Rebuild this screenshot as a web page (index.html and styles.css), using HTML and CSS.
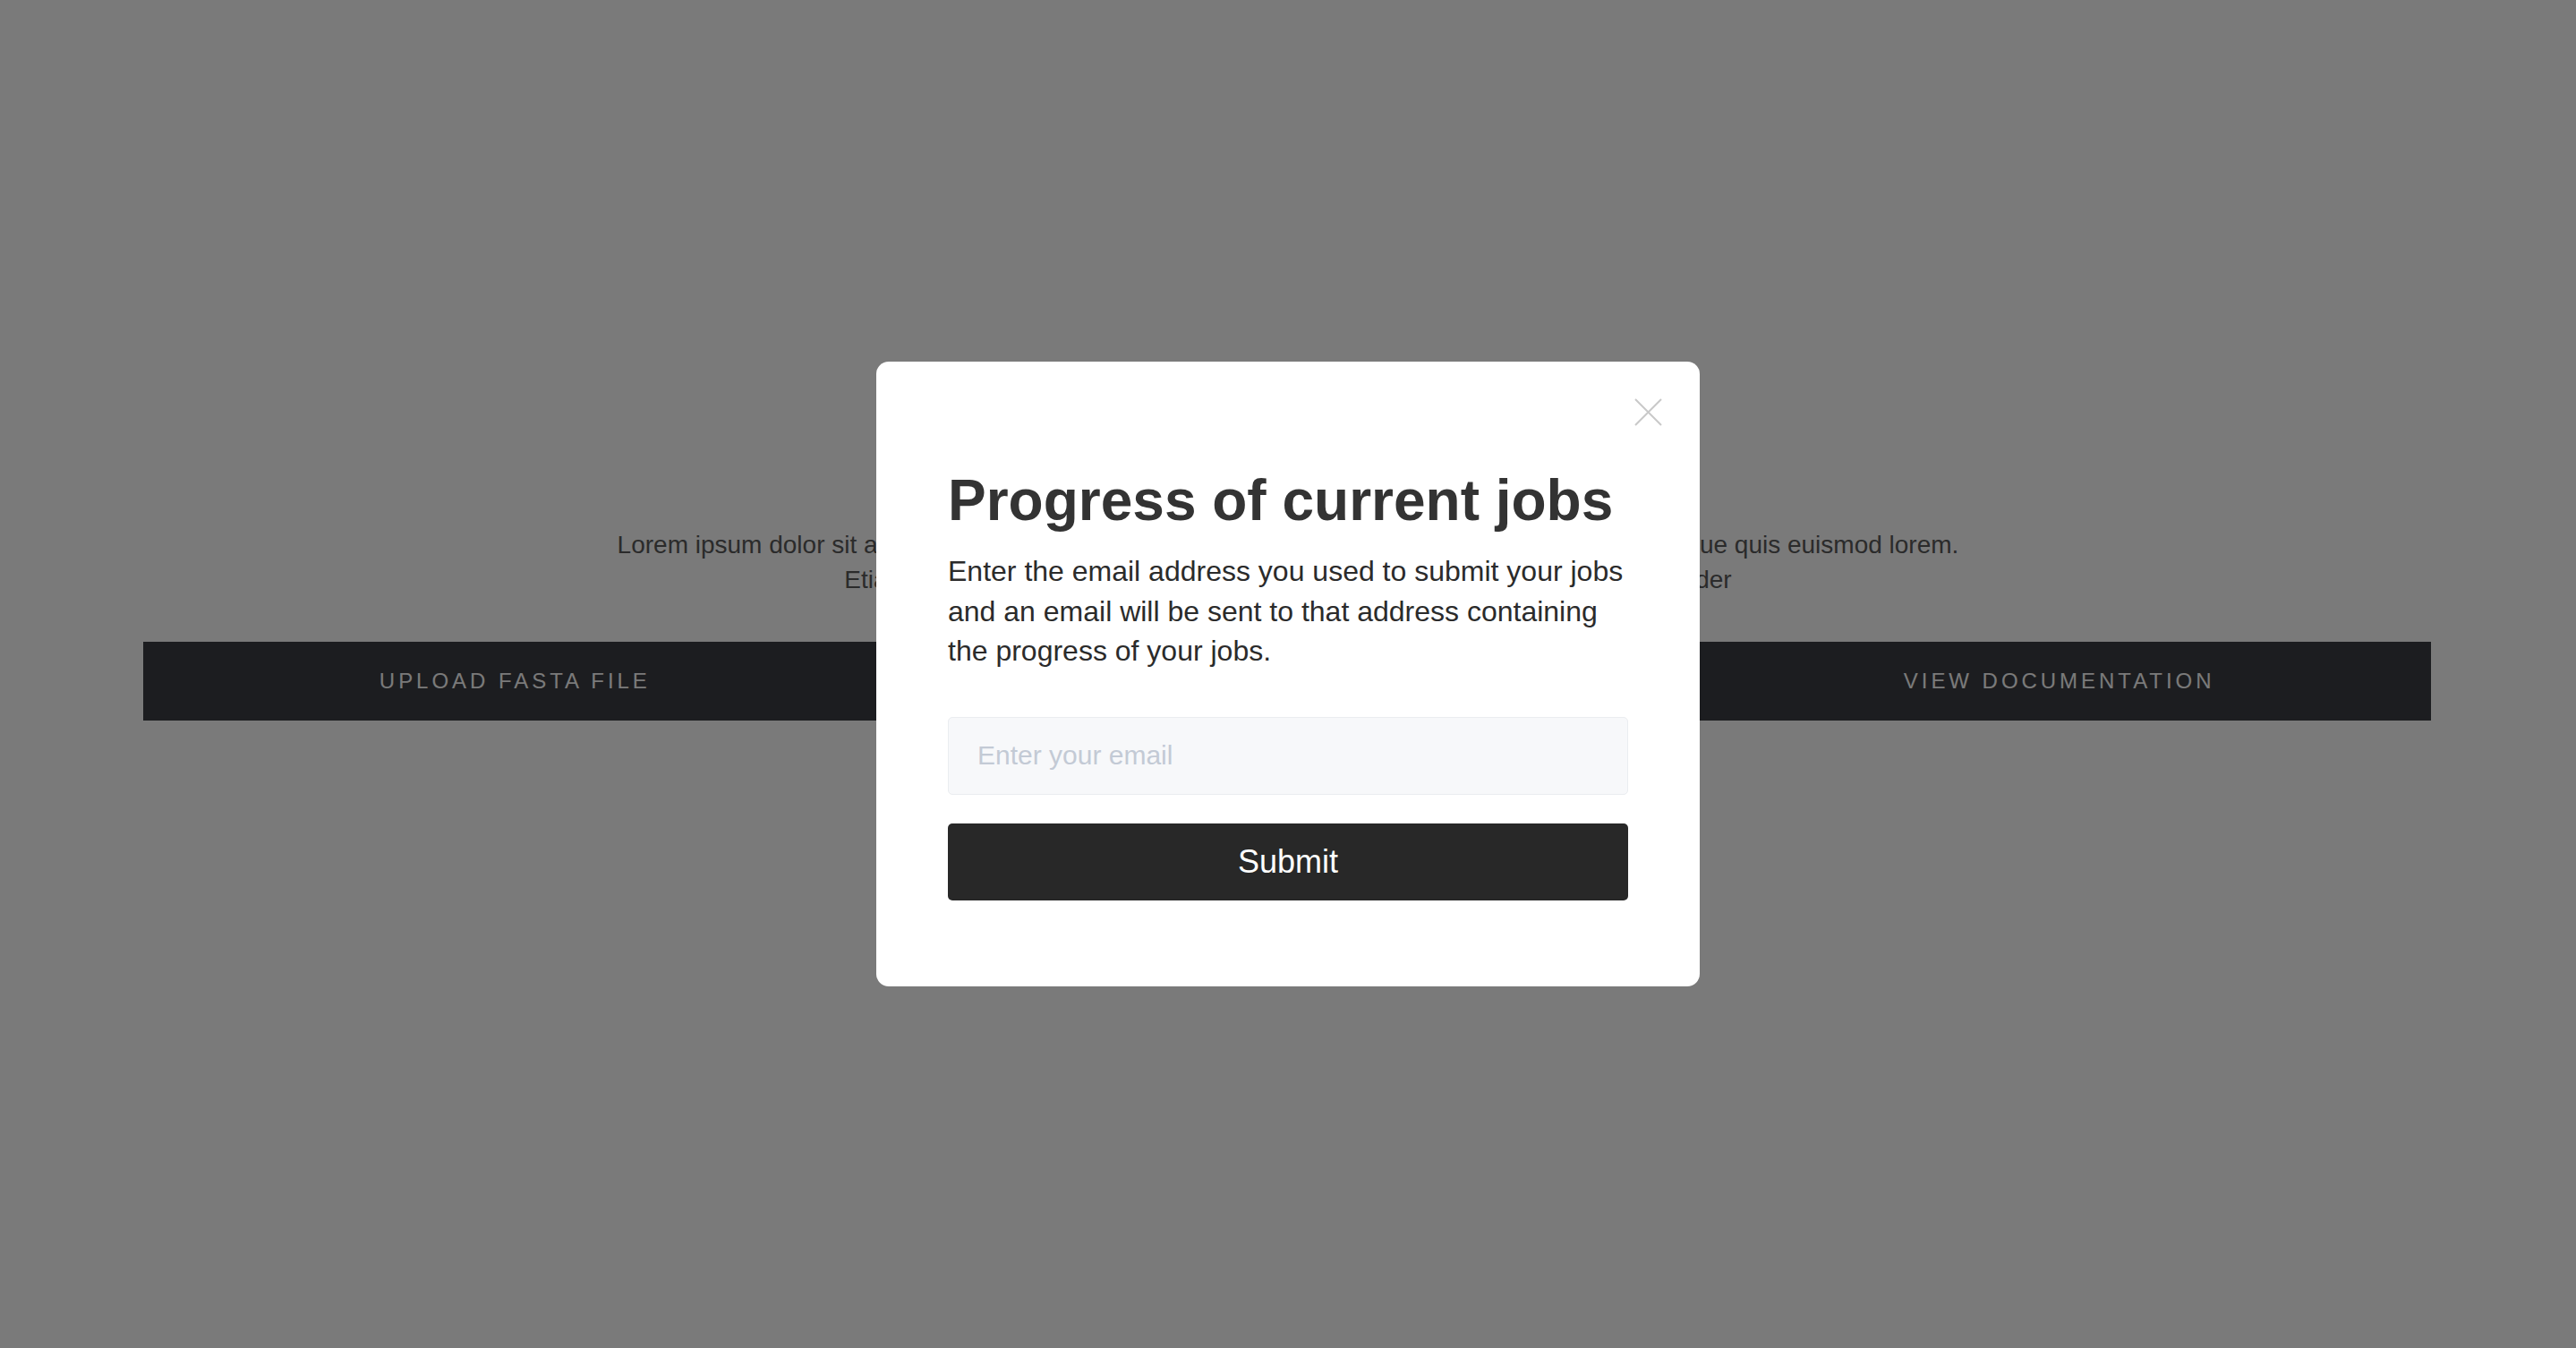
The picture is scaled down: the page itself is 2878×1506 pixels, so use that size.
FILE: index.html
```html
<!DOCTYPE html>
<html lang="en">
<head>
<meta charset="utf-8">
<title>Progress of current jobs</title>
<link rel="stylesheet" href="styles.css">
</head>
<body>
<main class="page">
  <p class="intro">Lorem ipsum dolor sit amet, consectetur adipiscing elit. Nulla facilisi. Sed vitae tempus augue neque quis euismod lorem.<br>Etiam sed orci in nisl fermentum tincidunt vitae sit amet phasellus id placeholder</p>
  <nav class="actions">
    <a class="action" href="#">Upload FASTA file</a>
    <a class="action" href="#">Check job progress</a>
    <a class="action" href="#">View documentation</a>
  </nav>
</main>

<div class="overlay">
  <div class="modal" role="dialog" aria-labelledby="modal-title">
    <button class="close" type="button" aria-label="Close">
      <svg width="31" height="31" viewBox="0 0 31 31" aria-hidden="true">
        <path d="M1 1 L30 30 M30 1 L1 30" stroke="#c9c9c9" stroke-width="2" fill="none"/>
      </svg>
    </button>
    <h2 class="modal-title" id="modal-title">Progress of current jobs</h2>
    <p class="modal-text">Enter the email address you used to submit your jobs and an email will be sent to that address containing the progress of your jobs.</p>
    <form class="modal-form">
      <input class="email" type="email" placeholder="Enter your email">
      <button class="submit" type="button">Submit</button>
    </form>
  </div>
</div>
</body>
</html>
```

FILE: styles.css
```css
html, body {
  margin: 0;
  padding: 0;
}

body {
  background: #ffffff;
  font-family: "Liberation Sans", Arial, Helvetica, sans-serif;
  width: 2878px;
  height: 1506px;
  overflow: hidden;
}

.page {
  padding-top: 589px;
}

.intro {
  margin: 0;
  font-size: 28px;
  line-height: 1.4;
  color: #5a5a5a;
  text-align: center;
}

.actions {
  margin: 50px 162px 0 160px;
  display: grid;
  grid-template-columns: 1fr 1fr 1fr;
  gap: 32px;
}

.action {
  height: 88px;
  background: #3c3e43;
  color: #ffffff;
  text-decoration: none;
  text-transform: uppercase;
  font-size: 24px;
  letter-spacing: 0.165em;
  display: flex;
  align-items: center;
  justify-content: center;
}

.overlay {
  position: fixed;
  inset: 0;
  background: rgba(0, 0, 0, 0.52);
  display: flex;
  align-items: center;
  justify-content: center;
}

.modal {
  position: relative;
  box-sizing: border-box;
  width: 920px;
  padding: 117px 80px 96px;
  background: #ffffff;
  border-radius: 14px;
  display: flex;
  flex-direction: column;
}

.close {
  position: absolute;
  top: 41px;
  right: 42px;
  width: 31px;
  height: 31px;
  padding: 0;
  border: 0;
  background: transparent;
  cursor: pointer;
}

.close svg {
  display: block;
}

.modal-title {
  margin: 0;
  font-size: 64px;
  line-height: 1.2;
  font-weight: 700;
  color: #333333;
}

.modal-text {
  margin: 18px 0 0;
  font-size: 32px;
  line-height: 44.5px;
  color: #2b2b2b;
}

.modal-form {
  margin-top: 51px;
  display: flex;
  flex-direction: column;
  gap: 32px;
}

.email {
  box-sizing: border-box;
  height: 87px;
  width: 100%;
  padding: 0 32px;
  border: 1px solid #eaedf0;
  border-radius: 5px;
  background: #f7f8fa;
  font-family: "Liberation Sans", Arial, Helvetica, sans-serif;
  font-size: 30px;
  color: #333333;
  outline: none;
}

.email::placeholder {
  color: #c3cad5;
}

.submit {
  height: 86px;
  width: 100%;
  border: 0;
  border-radius: 5px;
  background: #282828;
  color: #ffffff;
  font-family: "Liberation Sans", Arial, Helvetica, sans-serif;
  font-size: 36px;
  cursor: pointer;
}
```
